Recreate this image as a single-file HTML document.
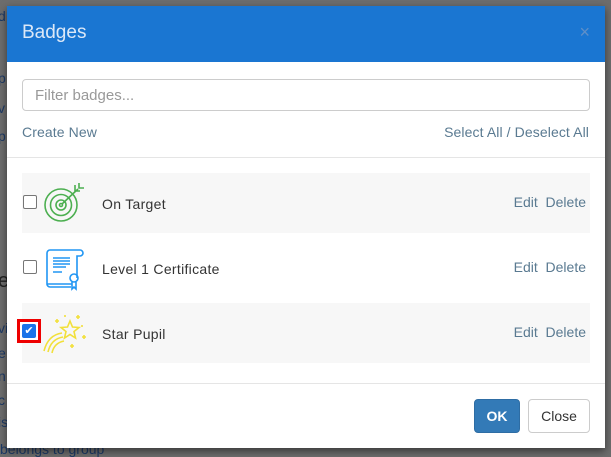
<!DOCTYPE html>
<html><head><style>
body{margin:0;width:611px;height:455px;background:#6d6d6d;font-family:"Liberation Sans",sans-serif;position:relative;overflow:hidden}
.bgt{position:absolute;color:#1d3a66;font-size:14px;left:-2px}
.modal{position:absolute;left:7px;top:6px;width:598px;height:442px;background:#fff;box-shadow:0 3px 8px rgba(0,0,0,.5)}
.hdr{height:56px;background:#1a76d2;position:relative}
.hdr h1{margin:0;position:absolute;left:15px;top:16px;font-size:19px;font-weight:normal;color:#dce8f7}
.x{position:absolute;right:15px;top:16px;color:#5f8fc8;font-size:18px}
.inp{position:absolute;left:15px;top:73px;width:568px;height:32px;border:1px solid #ccc;border-radius:4px;box-sizing:border-box;color:#999;font-size:15px;padding:7px 12px}
.lnk{position:absolute;color:#5a7a91;font-size:14px;top:118px;letter-spacing:.1px}
.hr{position:absolute;left:0;right:0;height:1px;background:#e5e5e5}
.row{position:absolute;left:15px;width:568px;height:60px}
.row.g{background:#f7f7f7}
.cb{position:absolute;left:1px;top:22px;width:12px;height:12px;border:1px solid #767676;border-radius:2px;background:#fff}
.name{position:absolute;left:80px;top:23px;font-size:14px;color:#333;letter-spacing:.3px}
.act{position:absolute;right:4px;top:21px;font-size:14px;color:#5a7a91}
.ic{position:absolute;left:20px;top:6px}
.btn{position:absolute;top:393px;height:34px;border-radius:4px;box-sizing:border-box;font-size:14px;text-align:center;line-height:32px}
</style></head><body>
<div class="bgt" style="top:8px">d</div>
<div class="bgt" style="top:70px">p</div>
<div class="bgt" style="top:100px">v</div>
<div class="bgt" style="top:128px">p</div>
<div class="bgt" style="top:270px;font-size:20px;color:#222">e</div>
<div class="bgt" style="top:320px">vi</div>
<div class="bgt" style="top:345px">e</div>
<div class="bgt" style="top:368px">n</div>
<div class="bgt" style="top:392px">c</div>
<div class="bgt" style="top:414px">is</div>
<div class="bgt" style="top:441px;left:0">belongs to group</div>
<div class="modal">
<div class="hdr"><h1>Badges</h1><span class="x">×</span></div>
<div class="inp">Filter badges...</div>
<div class="lnk" style="left:15px">Create New</div>
<div class="lnk" style="right:16px">Select All / Deselect All</div>
<div class="hr" style="top:151px"></div>
<div class="row g" style="top:167px"><div class="cb"></div>
<svg class="ic" width="48" height="48" viewBox="0 0 48 44" fill="none" stroke="#4caf50" stroke-width="1.6"><circle cx="19" cy="24" r="16"/><circle cx="19" cy="24" r="10.5"/><circle cx="19" cy="24" r="5"/><circle cx="19" cy="24" r="1.5"/><path d="M20 23 L36 8 M33 4 L33 10 L38 10 M37 2 L37 7 L42 7"/></svg>
<div class="name">On Target</div><div class="act">Edit&nbsp; Delete</div></div>
<div class="row" style="top:232px"><div class="cb"></div>
<svg class="ic" width="48" height="50" viewBox="0 0 48 46" fill="none" stroke="#2196f3" stroke-width="1.6"><path d="M8 4 H38 a3 3 0 0 1 0 6 H35 V32 M8 4 a3 3 0 0 0 -3 3 V38 H30 M5 38 a3 3 0 0 0 3 3 H29"/><path d="M11 12 H28 M11 15 H28 M11 18 H28 M11 21 H24 M11 26 H20" stroke-width="1.4"/><circle cx="32" cy="32" r="4"/><path d="M30 36 V43 L32 41 L34 43 V36"/></svg>
<div class="name">Level 1 Certificate</div><div class="act">Edit&nbsp; Delete</div></div>
<div class="row g" style="top:297px">
<div style="position:absolute;left:-5px;top:16px;width:24px;height:24px;border:3px solid #e00;box-sizing:border-box;background:#fff"><div style="position:absolute;left:2px;top:2px;width:14px;height:14px;background:#1a73e8;border-radius:2px;color:#fff;font-size:11px;line-height:14px;text-align:center">✔</div></div>
<svg class="ic" width="48" height="48" viewBox="0 0 48 44" fill="none" stroke="#f2e03a" stroke-width="1.6"><path d="M28 10 L30.5 16 L37 16.5 L32 20.5 L33.5 27 L28 23.5 L22.5 27 L24 20.5 L19 16.5 L25.5 16 Z"/><path d="M2 40 Q6 24 20 22 M6 41 Q9 28 21 26 M10 42 Q12 32 22 30"/><path d="M15 8 v4 M13 10 h4 M36 4 v4 M34 6 h4 M42 24 v4 M40 26 h4 M30 33 v4 M28 35 h4 M23 4 v2 M40 14 v2"/></svg>
<div class="name">Star Pupil</div><div class="act">Edit&nbsp; Delete</div></div>
<div class="hr" style="top:377px"></div>
<div class="btn" style="left:467px;width:46px;background:#337ab7;color:#fff;border:1px solid #2e6da4;font-weight:bold">OK</div>
<div class="btn" style="left:521px;width:62px;background:#fff;color:#333;border:1px solid #ccc">Close</div>
</div>
</body></html>
